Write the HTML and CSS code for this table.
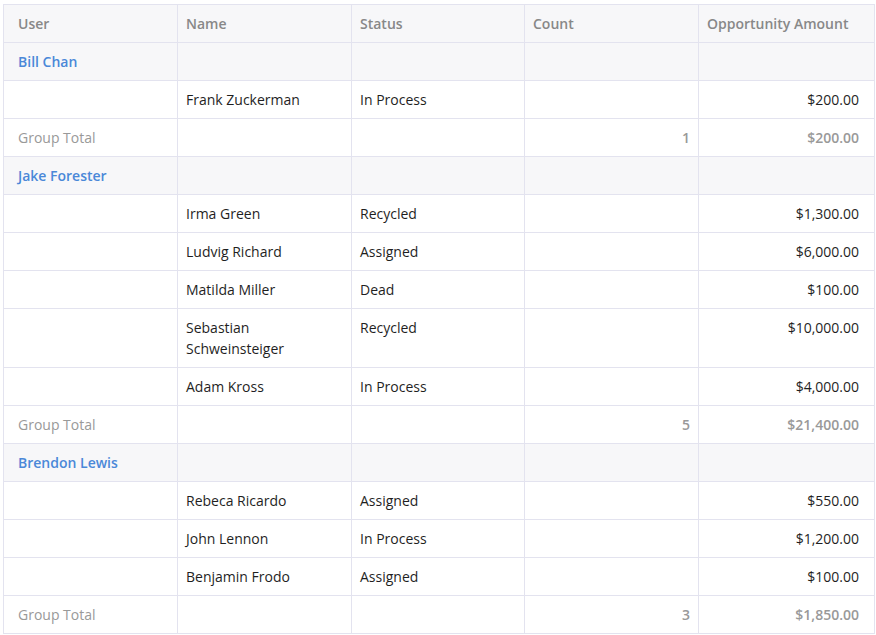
FILE: index.html
```html
<!DOCTYPE html>
<html>
<head>
<meta charset="utf-8">
<link rel="stylesheet" href="styles.css">
</head>
<body>
<table class="report">
  <colgroup>
    <col class="c1"><col class="c2"><col class="c3"><col class="c4"><col class="c5">
  </colgroup>
  <thead>
    <tr><th>User</th><th>Name</th><th>Status</th><th>Count</th><th>Opportunity Amount</th></tr>
  </thead>
  <tbody>
    <tr class="group"><td><a class="user">Bill Chan</a></td><td></td><td></td><td></td><td></td></tr>
    <tr><td></td><td>Frank Zuckerman</td><td>In Process</td><td></td><td class="num">$200.00</td></tr>
    <tr class="total"><td>Group Total</td><td></td><td></td><td class="num sum">1</td><td class="num sum">$200.00</td></tr>

    <tr class="group"><td><a class="user">Jake Forester</a></td><td></td><td></td><td></td><td></td></tr>
    <tr><td></td><td>Irma Green</td><td>Recycled</td><td></td><td class="num">$1,300.00</td></tr>
    <tr><td></td><td>Ludvig Richard</td><td>Assigned</td><td></td><td class="num">$6,000.00</td></tr>
    <tr><td></td><td>Matilda Miller</td><td>Dead</td><td></td><td class="num">$100.00</td></tr>
    <tr><td></td><td>Sebastian Schweinsteiger</td><td>Recycled</td><td></td><td class="num">$10,000.00</td></tr>
    <tr><td></td><td>Adam Kross</td><td>In Process</td><td></td><td class="num">$4,000.00</td></tr>
    <tr class="total"><td>Group Total</td><td></td><td></td><td class="num sum">5</td><td class="num sum">$21,400.00</td></tr>

    <tr class="group"><td><a class="user">Brendon Lewis</a></td><td></td><td></td><td></td><td></td></tr>
    <tr><td></td><td>Rebeca Ricardo</td><td>Assigned</td><td></td><td class="num">$550.00</td></tr>
    <tr><td></td><td>John Lennon</td><td>In Process</td><td></td><td class="num">$1,200.00</td></tr>
    <tr><td></td><td>Benjamin Frodo</td><td>Assigned</td><td></td><td class="num">$100.00</td></tr>
    <tr class="total"><td>Group Total</td><td></td><td></td><td class="num sum">3</td><td class="num sum">$1,850.00</td></tr>
  </tbody>
</table>
</body>
</html>
```

FILE: styles.css
```css
html, body {
  margin: 0;
  padding: 0;
  background: #ffffff;
}
body {
  padding: 4px 0 0 3px;
  font-family: "Open Sans", "Liberation Sans", sans-serif;
  font-size: 14px;
  color: #1f1f1f;
}
.report {
  border-collapse: collapse;
  table-layout: fixed;
  width: 871px;
}
.c1 { width: 174px; }
.c2 { width: 174px; }
.c3 { width: 173px; }
.c4 { width: 174px; }
.c5 { width: 176px; }
.report th,
.report td {
  border: 1px solid #e3e3ef;
  padding: 8px 8px 8px 8px;
  line-height: 21px;
  text-align: left;
  vertical-align: top;
  font-weight: 400;
}
.report th:first-child,
.report td:first-child {
  padding-left: 14px;
}
.report th:last-child,
.report td:last-child {
  padding-right: 15px;
}
.report thead th {
  background: #f7f7f9;
  color: #888888;
  font-weight: 600;
}
.report tr.group td {
  background: #f7f7f9;
}
.user {
  color: #4a88d8;
  font-weight: 600;
  text-decoration: none;
}
.report td.num {
  text-align: right;
}
.report tr.total td {
  color: #999999;
}
.report tr.total td.sum {
  font-weight: 600;
}
```
